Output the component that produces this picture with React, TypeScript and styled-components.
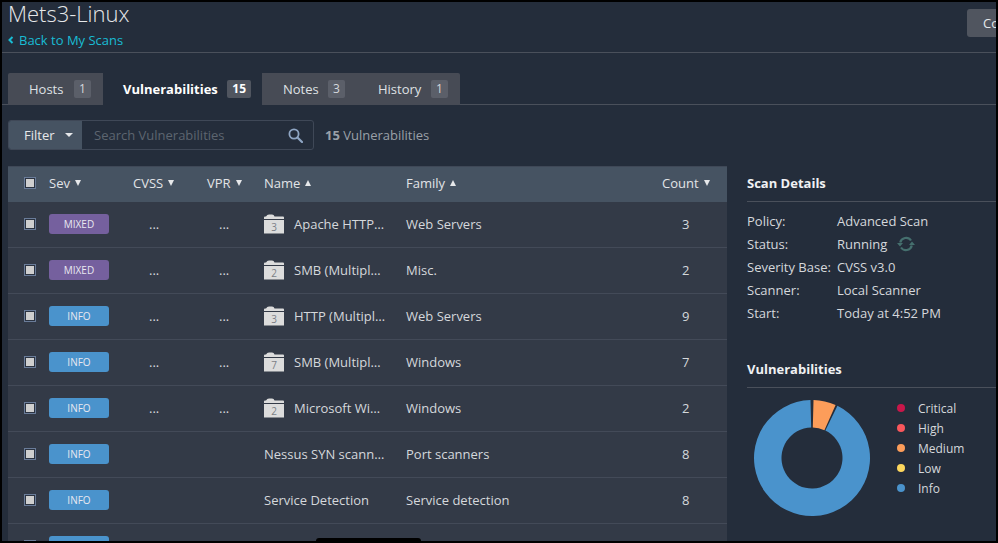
import React from "react";
import styled, { createGlobalStyle } from "styled-components";

const Global = createGlobalStyle`
  html, body { margin: 0; padding: 0; background: #000; }
  body { font-family: "Open Sans", "Liberation Sans", sans-serif; font-size: 13px; color: #d5d8dc; }
  * { box-sizing: border-box; }
`;

const Frame = styled.div`
  position: relative;
  width: 994px;
  height: 539px;
  margin: 2px;
  background: #242d3b;
  overflow: hidden;
`;
const Header = styled.header`
  display: flex;
  height: 51px;
  border-bottom: 1px solid #4a505b;
`;
const TitleBlock = styled.div`
  flex: 0 0 965px;
  padding-left: 6px;
`;
const Title = styled.h1`
  margin: -2px 0 0;
  font-size: 22px;
  line-height: 26px;
  font-weight: 300;
  color: #e6e8ea;
`;
const BackLink = styled.a`
  display: flex;
  align-items: center;
  gap: 5px;
  margin-top: 5px;
  font-size: 13px;
  line-height: 18px;
  color: #19bcd4;
`;
const ActionButton = styled.button`
  flex: 0 0 90px;
  height: 28px;
  margin-top: 7px;
  padding: 0 0 0 16px;
  border: 0;
  border-radius: 3px 0 0 3px;
  background: #50555f;
  color: #e6e8ea;
  font: 13px "Open Sans", sans-serif;
  text-align: left;
`;
const TabBar = styled.nav`
  display: flex;
  height: 32px;
  margin-top: 20px;
  padding-left: 6px;
  border-bottom: 1px solid #4a505b;
`;
const Tab = styled.div<{ $active?: boolean; $w: number; $left: number; $pad: number }>`
  display: flex;
  align-items: center;
  justify-content: space-between;
  width: ${p => p.$w}px;
  height: 32px;
  padding: 0 ${p => p.$pad}px 0 ${p => p.$left}px;
  background: ${p => (p.$active ? "#242d3b" : "#474b55")};
  color: ${p => (p.$active ? "#fff" : "#dfe1e4")};
  font-weight: ${p => (p.$active ? 700 : 400)};
  &:first-child { border-top-left-radius: 2px; }
  &:last-child { border-top-right-radius: 2px; }
`;
const TabCount = styled.span<{ $active?: boolean }>`
  display: flex;
  align-items: center;
  justify-content: center;
  min-width: 17px;
  height: 18px;
  padding: 0 ${p => (p.$active ? 5 : 0)}px;
  margin-bottom: 1px;
  border-radius: 2px;
  background: ${p => (p.$active ? "#50555f" : "#5b5f69")};
  color: ${p => (p.$active ? "#fff" : "#d5d8dc")};
  font-size: 12px;
`;
const FilterBar = styled.div`
  display: flex;
  align-items: center;
  margin: 15px 0 16px 6px;
  height: 30px;
`;
const FilterGroup = styled.div`
  display: flex;
  width: 306px;
  height: 30px;
  border: 1px solid #3f4857;
  border-radius: 3px;
  overflow: hidden;
`;
const FilterButton = styled.div`
  display: flex;
  align-items: center;
  gap: 10px;
  flex: 0 0 73px;
  padding-left: 15px;
  background: #465362;
  color: #e6e8ea;
`;
const Caret = styled.i<{ $up?: boolean; $side?: number; $tall?: number }>`
  display: inline-block;
  width: 0;
  height: 0;
  border-left: ${p => p.$side ?? 3}px solid transparent;
  border-right: ${p => p.$side ?? 3}px solid transparent;
  ${p => (p.$up ? "border-bottom" : "border-top")}: ${p => p.$tall ?? 6}px solid #e6e8ea;
`;
const Search = styled.div`
  flex: 1;
  display: flex;
  align-items: center;
  justify-content: space-between;
  padding: 0 10px 0 12px;
  color: #5d6570;
`;
const ResultCount = styled.div`
  margin-left: 11px;
  color: #9aa0a8;
  b { font-weight: 700; }
`;
const Main = styled.div`
  display: flex;
  padding-left: 6px;
`;
const Table = styled.section`
  flex: 0 0 719px;
`;
const columns = "41px 84px 74px 57px 142px 256px 65px";
const HeaderRow = styled.div`
  display: grid;
  grid-template-columns: ${columns};
  align-items: center;
  height: 36px;
  padding-bottom: 3px;
  background: #465362;
  border-top: 1px solid #3f4857;
  color: #e2e4e7;
`;
const Row = styled.div`
  display: grid;
  grid-template-columns: ${columns};
  align-items: center;
  height: 46px;
  padding-bottom: 2px;
  background: #333a47;
  border-bottom: 1px solid #434a58;
  color: #d5d8dc;
`;
const Check = styled.span`
  display: block;
  width: 12px;
  height: 12px;
  margin-left: 16px;
  border: 1px solid #6a7c99;
  background: #cfcfcf;
  box-shadow: inset 0 0 0 1px #2c3442;
`;
const HeadCell = styled.div`
  display: flex;
  align-items: center;
  gap: 5px;
`;
const Badge = styled.span<{ $kind: "mixed" | "info" }>`
  display: flex;
  align-items: center;
  justify-content: center;
  width: 60px;
  height: 20px;
  border-radius: 3px;
  background: ${p => (p.$kind === "mixed" ? "#75609e" : "#4a93cc")};
  color: #e8e8f0;
  font-size: 10px;
`;
const Dots = styled.div<{ $pad: number }>`
  padding-left: ${p => p.$pad}px;
`;
const NameCell = styled.div`
  display: flex;
  align-items: center;
  gap: 10px;
  white-space: nowrap;
`;
const CountCell = styled.div`
  padding-left: 20px;
`;
const Side = styled.aside`
  flex: 1;
  margin-left: 20px;
`;
const SideTitle = styled.h2`
  margin: 0;
  height: 36px;
  padding-top: 8px;
  font-size: 13px;
  line-height: 18px;
  font-weight: 700;
  color: #f0f1f3;
  border-bottom: 1px solid #4a505b;
`;
const Details = styled.dl`
  display: grid;
  grid-template-columns: 90px 1fr;
  grid-auto-rows: 23px;
  align-items: center;
  margin: 7px 0 28px;
  dt, dd { margin: 0; }
`;
const Running = styled.dd`
  display: flex;
  align-items: center;
  gap: 10px;
`;
const ChartRow = styled.div`
  display: flex;
  padding: 11px 0 0 6px;
`;
const Legend = styled.ul`
  list-style: none;
  margin: -1px 0 0 26px;
  padding: 0;
  font-size: 12px;
`;
const LegendItem = styled.li`
  display: flex;
  align-items: center;
  gap: 13px;
  height: 20px;
`;
const Dot = styled.span<{ $c: string }>`
  width: 8px;
  height: 8px;
  border-radius: 50%;
  background: ${p => p.$c};
`;
const Notch = styled.div`
  position: absolute;
  left: 314px;
  bottom: 0;
  width: 105px;
  height: 3px;
  background: #000;
  border-radius: 3px 3px 0 0;
`;

const Folder = ({ n }: { n: string }) => (
  <svg width="20" height="20" viewBox="0 0 20 20">
    <path d="M0 3.5 Q0 2.5 1 2.5 L2 2.5 Q3 0.5 5 0.5 L8 0.5 Q10 0.5 10.5 2.5 L19 2.5 Q20 2.5 20 3.5 L20 5 L0 5 Z" fill="#dcdcdc" />
    <rect x="0" y="6" width="20" height="13.5" fill="#dcdcdc" />
    <text x="10" y="17" textAnchor="middle" fontSize="10" fontFamily="Open Sans, sans-serif" fill="#7b7f86">{n}</text>
  </svg>
);

const SearchIcon = () => (
  <svg width="15" height="15" viewBox="0 0 15 15" fill="none" stroke="#8fa6c4" strokeWidth="1.8">
    <circle cx="6" cy="6" r="4.6" />
    <path d="M9.5 9.5 L14 14" strokeWidth="2.2" strokeLinecap="round" />
  </svg>
);

const SyncIcon = () => (
  <svg width="18" height="16" viewBox="0 0 18 16" fill="none">
    <path d="M3.2 6.5 A6 6 0 0 1 14 4.5" stroke="#456f6e" strokeWidth="2.2" />
    <path d="M14.8 9.5 A6 6 0 0 1 4 11.5" stroke="#456f6e" strokeWidth="2.2" />
    <path d="M0 7 L6 7 L3 10.5 Z" fill="#456f6e" />
    <path d="M18 9 L12 9 L15 5.5 Z" fill="#456f6e" />
  </svg>
);

const BackChevron = () => (
  <svg width="6" height="8" viewBox="0 0 6 8" fill="none" stroke="#19bcd4" strokeWidth="2">
    <path d="M4.5 1 L1.5 4 L4.5 7" />
  </svg>
);

const pt = (r: number, deg: number) => {
  const a = ((deg - 90) * Math.PI) / 180;
  return `${(59 + r * Math.cos(a)).toFixed(2)} ${(59 + r * Math.sin(a)).toFixed(2)}`;
};
const slice = (from: number, to: number) => {
  const big = to - from > 180 ? 1 : 0;
  return `M${pt(58, from)} A58 58 0 ${big} 1 ${pt(58, to)} L${pt(30.5, to)} A30.5 30.5 0 ${big} 0 ${pt(30.5, from)} Z`;
};

const Donut = () => (
  <svg width="118" height="118" viewBox="0 0 118 118">
    <path d={slice(26, 358.5)} fill="#4a93cc" />
    <path d={slice(1.5, 24)} fill="#fc9d5a" />
  </svg>
);

const rows = [
  { sev: "mixed", dots: true, folder: "3", name: "Apache HTTP…", family: "Web Servers", count: 3 },
  { sev: "mixed", dots: true, folder: "2", name: "SMB (Multipl…", family: "Misc.", count: 2 },
  { sev: "info", dots: true, folder: "3", name: "HTTP (Multipl…", family: "Web Servers", count: 9 },
  { sev: "info", dots: true, folder: "7", name: "SMB (Multipl…", family: "Windows", count: 7 },
  { sev: "info", dots: true, folder: "2", name: "Microsoft Wi…", family: "Windows", count: 2 },
  { sev: "info", dots: false, name: "Nessus SYN scann…", family: "Port scanners", count: 8 },
  { sev: "info", dots: false, name: "Service Detection", family: "Service detection", count: 8 },
  { sev: "info", dots: false, name: "", family: "", count: "" },
] as const;

export default function App() {
  return (
    <>
      <Global />
      <Frame>
        <Header>
          <TitleBlock>
            <Title>Mets3-Linux</Title>
            <BackLink><BackChevron />Back to My Scans</BackLink>
          </TitleBlock>
          <ActionButton>Configure</ActionButton>
        </Header>
        <TabBar>
          <Tab $w={95} $left={21} $pad={12}>Hosts <TabCount>1</TabCount></Tab>
          <Tab $active $w={159} $left={20} $pad={11}>Vulnerabilities <TabCount $active>15</TabCount></Tab>
          <Tab $w={98} $left={21} $pad={15}>Notes <TabCount>3</TabCount></Tab>
          <Tab $w={100} $left={18} $pad={12}>History <TabCount>1</TabCount></Tab>
        </TabBar>
        <FilterBar>
          <FilterGroup>
            <FilterButton>Filter <Caret $side={4} $tall={4} /></FilterButton>
            <Search>Search Vulnerabilities <SearchIcon /></Search>
          </FilterGroup>
          <ResultCount><b>15</b> Vulnerabilities</ResultCount>
        </FilterBar>
        <Main>
          <Table>
            <HeaderRow>
              <Check />
              <HeadCell>Sev <Caret /></HeadCell>
              <HeadCell>CVSS <Caret /></HeadCell>
              <HeadCell>VPR <Caret /></HeadCell>
              <HeadCell>Name <Caret $up /></HeadCell>
              <HeadCell>Family <Caret $up /></HeadCell>
              <HeadCell>Count <Caret /></HeadCell>
            </HeaderRow>
            {rows.map((r, i) => (
              <Row key={i}>
                <Check />
                <div><Badge $kind={r.sev}>{r.sev.toUpperCase()}</Badge></div>
                <Dots $pad={16}>{r.dots ? "..." : ""}</Dots>
                <Dots $pad={12}>{r.dots ? "..." : ""}</Dots>
                <NameCell>
                  {"folder" in r && r.folder ? <Folder n={r.folder} /> : null}
                  {r.name}
                </NameCell>
                <div>{r.family}</div>
                <CountCell>{r.count}</CountCell>
              </Row>
            ))}
          </Table>
          <Side>
            <SideTitle>Scan Details</SideTitle>
            <Details>
              <dt>Policy:</dt><dd>Advanced Scan</dd>
              <dt>Status:</dt><Running>Running <SyncIcon /></Running>
              <dt>Severity Base:</dt><dd>CVSS v3.0</dd>
              <dt>Scanner:</dt><dd>Local Scanner</dd>
              <dt>Start:</dt><dd>Today at 4:52 PM</dd>
            </Details>
            <SideTitle>Vulnerabilities</SideTitle>
            <ChartRow>
              <Donut />
              <Legend>
                <LegendItem><Dot $c="#c8174a" />Critical</LegendItem>
                <LegendItem><Dot $c="#f9575c" />High</LegendItem>
                <LegendItem><Dot $c="#fc9d5a" />Medium</LegendItem>
                <LegendItem><Dot $c="#fdd75d" />Low</LegendItem>
                <LegendItem><Dot $c="#4a93cc" />Info</LegendItem>
              </Legend>
            </ChartRow>
          </Side>
        </Main>
        <Notch />
      </Frame>
    </>
  );
}
